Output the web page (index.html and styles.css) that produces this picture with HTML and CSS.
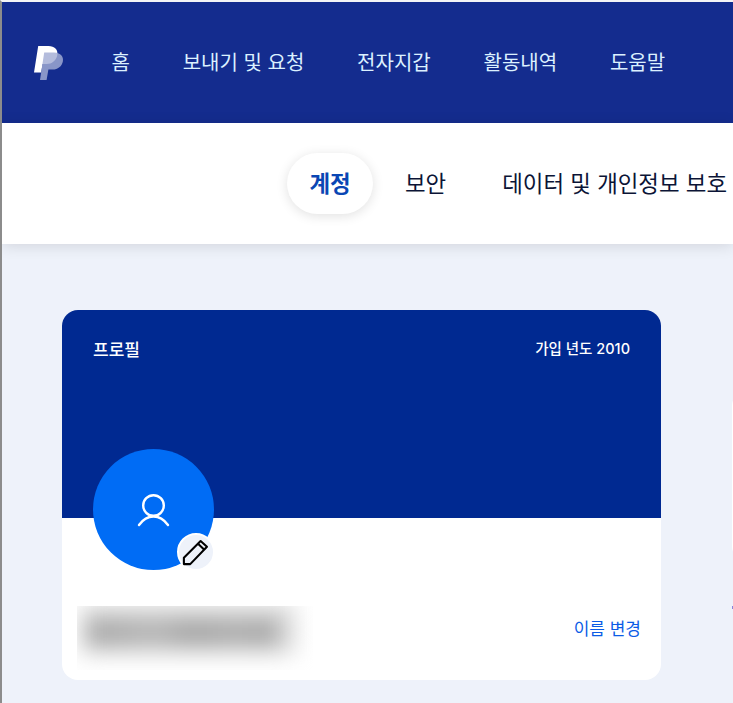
FILE: index.html
```html
<!DOCTYPE html>
<html lang="ko">
  <head>
    <meta charset="utf-8" />
    <title>계정</title>
    <link rel="stylesheet" href="styles.css">
  </head>
  <body>
    <div class="page">
      <!--Top nav-->
      <header class="topbar">
        <svg class="logo" width="30" height="36" viewBox="0 0 30 36">
          <path fill="#fff" d="M4.2 1H14.5C20.5 1 24.2 4.6 23.3 10C22.4 15.6 17.8 19 12.5 19H8.6L7.1 27.5H0Z"></path>
          <path fill="#a4add4" opacity="0.82" d="M10.2 7.5H20C26 7.5 29.8 11 28.9 16.2C28 21.4 23.6 24.5 18.8 24.5H14.4L12.6 35H6Z"></path>
        </svg>
        <nav class="topbar-links">
          <a>홈</a>
          <a>보내기 및 요청</a>
          <a>전자지갑</a>
          <a>활동내역</a>
          <a>도움말</a>
        </nav>
      </header>

      <!--Sub nav-->
      <div class="subnav">
        <a class="subnav-pill">계정</a>
        <a class="subnav-link">보안</a>
        <a class="subnav-link">데이터 및 개인정보 보호</a>
      </div>

      <main class="content">
        <section class="profile-card">
          <div class="profile-banner">
            <span class="profile-title">프로필</span>
            <span class="profile-since">가입 년도 2010</span>
          </div>

          <div class="avatar">
            <svg width="36" height="36" viewBox="0 0 36 36" fill="none" stroke="#fff" stroke-width="2.4" stroke-linecap="round">
              <circle cx="17.5" cy="13.5" r="10.3"></circle>
              <path d="M3 33C7 27.5 12 24.5 17.5 24.5C23 24.5 28 27.5 32 33"></path>
            </svg>
            <div class="avatar-edit">
              <svg width="30" height="30" viewBox="0 0 26 26" fill="none" stroke="#000" stroke-width="1.8" stroke-linejoin="round">
                <path d="M2.5 23.5V18L17 3.5L22.5 8.5L8 23.5Z"></path>
                <path d="M15 6L20.2 11"></path>
              </svg>
            </div>
          </div>

          <div class="profile-name-row">
            <div class="name-mask"><div class="name-blur"></div></div>
            <a class="name-change">이름 변경</a>
          </div>
        </section>

        <aside class="side-col">
          <div class="side-card"></div>
          <div class="side-link"></div>
        </aside>
      </main>
    </div>
  </body>
</html>
```

FILE: styles.css
```css
* {
  box-sizing: border-box;
}
html,
body {
  margin: 0;
  height: 100%;
}
body {
  font-family: "Noto Sans CJK KR", "Liberation Sans", sans-serif;
  background-color: #eef2fa;
  overflow: hidden;
}
.page {
  height: 703px;
  border-top: 2px solid #f4f4f6;
  border-left: 2px solid #8c8c8c;
  overflow: hidden;
}
.topbar {
  display: flex;
  align-items: center;
  height: 121px;
  padding-left: 32px;
  background-color: #142c8e;
}
.logo {
  flex-shrink: 0;
  margin-top: 1px;
}
.topbar-links {
  display: flex;
  gap: 52.8px;
  margin-left: 47.5px;
  padding-bottom: 2px;
  font-size: 20px;
  color: #dcf1ff;
  white-space: nowrap;
}
.subnav {
  display: flex;
  align-items: center;
  height: 121px;
  padding-left: 285px;
  background-color: #fff;
  box-shadow: 0 2px 14px rgba(0, 0, 0, 0.12);
  white-space: nowrap;
  position: relative;
  font-size: 22.4px;
}
.subnav-pill {
  display: flex;
  align-items: center;
  justify-content: center;
  flex-shrink: 0;
  width: 86px;
  height: 61px;
  padding-bottom: 3px;
  border-radius: 31px;
  background-color: #fff;
  box-shadow: 0 2px 12px rgba(0, 0, 0, 0.12);
  font-weight: 700;
  color: #0a46b4;
}
.subnav-link {
  margin-left: 32px;
  padding-bottom: 3px;
  color: #0b1436;
}
.subnav-link + .subnav-link {
  margin-left: 56px;
}
.content {
  display: flex;
  gap: 70.5px;
  padding: 66px 0 0 60px;
}
.profile-card {
  position: relative;
  flex-shrink: 0;
  width: 599px;
  height: 370px;
  border-radius: 16px;
  background-color: #fff;
  overflow: hidden;
}
.profile-banner {
  display: flex;
  justify-content: space-between;
  height: 208px;
  padding: 28px 31px;
  background-color: #002991;
  color: #fff;
  line-height: 22px;
}
.profile-title {
  font-size: 17px;
  font-weight: 500;
}
.profile-since {
  font-family: Inter, "Noto Sans CJK KR", sans-serif;
  font-size: 14.5px;
  font-weight: 500;
}
.avatar {
  position: absolute;
  left: 31px;
  top: 139px;
  display: flex;
  align-items: center;
  justify-content: center;
  width: 121px;
  height: 121px;
  border-radius: 50%;
  background-color: #006cf5;
}
.avatar-edit {
  position: absolute;
  right: -1px;
  bottom: -1px;
  display: flex;
  align-items: center;
  justify-content: center;
  width: 38px;
  height: 38px;
  border: 2px solid #fff;
  border-radius: 50%;
  background-color: #eef2fa;
}
.avatar-edit svg {
  flex-shrink: 0;
}
.profile-name-row {
  display: flex;
  justify-content: space-between;
  height: 162px;
  padding: 88px 20px 10px 15px;
}
.name-mask {
  width: 236px;
  height: 64px;
  overflow: hidden;
}
.name-blur {
  width: 190px;
  height: 25px;
  margin: 14px 0 0 10px;
  background: linear-gradient(90deg, #a4a4a4, #b4b4b4 36%, #a2a2a2 55%, #acacac 80%, #a0a0a0);
  box-shadow: 6px -3px 0 12px #d8d8d8;
  filter: blur(11px);
}
.name-change {
  margin-top: 9px;
  font-size: 17px;
  line-height: 26px;
  color: #0b5ce6;
}
.side-col {
  flex-shrink: 0;
  width: 100px;
}
.side-card {
  height: 172px;
  margin-top: 80px;
  border-radius: 16px;
  background-color: #fff;
}
.side-link {
  width: 3px;
  height: 3px;
  margin: 44px 0 0 0.5px;
  background-color: #8a86d8;
}
```
